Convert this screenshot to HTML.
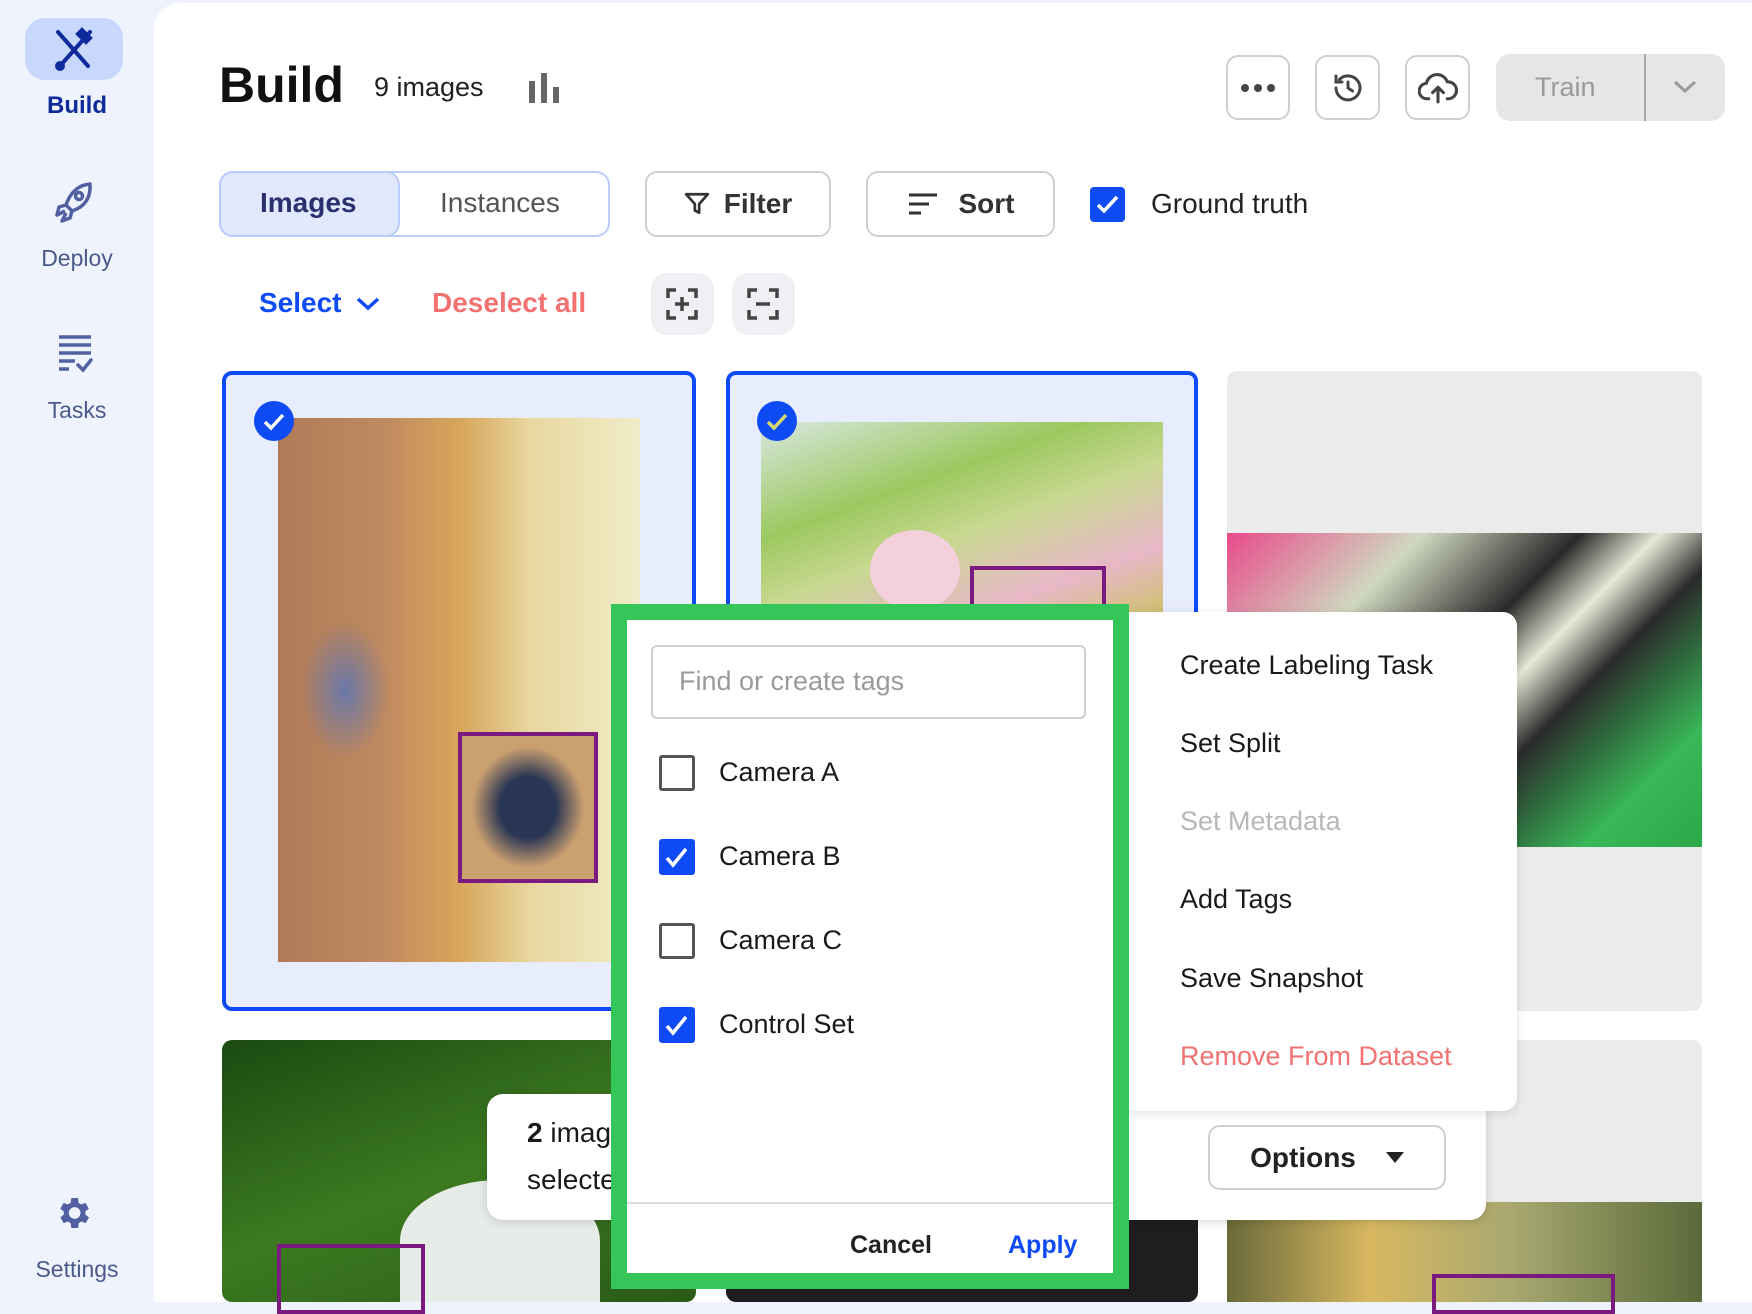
<!DOCTYPE html>
<html><head><meta charset="utf-8"><style>
*{margin:0;padding:0;box-sizing:border-box}
body{width:1752px;height:1302px;overflow:hidden;background:#eef3fd;font-family:"Liberation Sans",sans-serif;position:relative;color:#1a1a1a}
.a{position:absolute}
.main{left:154px;top:3px;width:1598px;height:1299px;background:#fff;border-top-left-radius:26px}
.nav{left:0;width:154px;text-align:center;font-size:23px;color:#4a5a8a}
.btn{border:2px solid #cfcfcf;border-radius:12px;background:#fff;display:flex;align-items:center;justify-content:center}
.card{border-radius:10px;overflow:hidden}
.sel{border:4px solid #0f4bf5;background:#e8edfd}
.chk{width:40px;height:40px;border-radius:50%;background:#0f4bf5}
.box{border:4px solid #7a1a80}
.cb{width:36px;height:36px;border:3px solid #555;border-radius:3px;background:#fff}
.cbon{background:#0f4bf5;border-color:#0f4bf5}
.lbl{font-size:27px;color:#1a1a1a}
.mi{left:1180px;font-size:27px;color:#1a1a1a}
</style></head><body>
<div class="a main"></div>
<!-- sidebar -->
<div class="a" style="left:25px;top:18px;width:98px;height:62px;background:#c8d8fd;border-radius:20px"></div>
<svg class="a" style="left:52px;top:26px" width="44" height="46" viewBox="0 0 44 46" fill="none" stroke="#0f2a9a" stroke-width="4" stroke-linecap="round"><path d="M6 6 L36 40"/><path d="M38 6 L8 40"/><path d="M30 4 l8 8 l-4 4 l-8-8z" fill="#0f2a9a"/><circle cx="8" cy="40" r="3"/></svg>
<div class="a nav" style="top:92px;color:#0f2a9a;font-weight:bold;font-size:24px">Build</div>
<svg class="a" style="left:54px;top:181px" width="40" height="42" viewBox="0 0 40 42" fill="none" stroke="#5060a0" stroke-width="3.5" stroke-linejoin="round"><path d="M36 3 C24 4 16 12 12 24 l6 6 C30 26 37 18 36 3z"/><circle cx="25" cy="15" r="3.5"/><path d="M12 24 l-7 2 l-2 8 l8-4"/><path d="M18 30 l-2 7 l-8 3 l4-8"/></svg>
<div class="a nav" style="top:245px">Deploy</div>
<svg class="a" style="left:57px;top:334px" width="36" height="40" viewBox="0 0 36 40" stroke="#5060a0" stroke-width="3.5" fill="none"><path d="M2 3h32M2 11h32M2 19h32M2 27h16M2 35h10"/><path d="M21 31l5 5 8-10" stroke-linecap="round"/></svg>
<div class="a nav" style="top:397px">Tasks</div>
<svg class="a" style="left:53px;top:1193px" width="40" height="40" viewBox="0 0 24 24" fill="#5060a0"><path d="M19.4 13a7.5 7.5 0 0 0 0-2l2.1-1.6-2-3.5-2.5 1a7.6 7.6 0 0 0-1.7-1L15 3h-4l-.4 2.9a7.6 7.6 0 0 0-1.7 1l-2.5-1-2 3.5L6.5 11a7.5 7.5 0 0 0 0 2l-2.1 1.6 2 3.5 2.5-1c.5.4 1.1.7 1.7 1L11 21h4l.4-2.9c.6-.3 1.2-.6 1.7-1l2.5 1 2-3.5zM13 15.5a3.5 3.5 0 1 1 0-7 3.5 3.5 0 0 1 0 7z"/></svg>
<div class="a nav" style="top:1256px">Settings</div>

<!-- header -->
<div class="a" style="left:219px;top:56px;font-size:50px;font-weight:bold;color:#111">Build</div>
<div class="a" style="left:374px;top:72px;font-size:27px;color:#222">9 images</div>
<svg class="a" style="left:529px;top:73px" width="32" height="30"><rect x="0" y="8" width="6" height="22" fill="#666"/><rect x="12" y="0" width="6" height="30" fill="#666"/><rect x="24" y="14" width="6" height="16" fill="#666"/></svg>
<div class="a btn" style="left:1226px;top:55px;width:64px;height:65px"><svg width="34" height="8"><circle cx="4" cy="4" r="4" fill="#444"/><circle cx="17" cy="4" r="4" fill="#444"/><circle cx="30" cy="4" r="4" fill="#444"/></svg></div>
<div class="a btn" style="left:1315px;top:55px;width:65px;height:65px"><svg width="36" height="36" viewBox="0 0 24 24" fill="none" stroke="#444" stroke-width="2" stroke-linecap="round"><path d="M4 12a8 8 0 1 0 2.3-5.7"/><path d="M4 4v4h4"/><path d="M12 8v4l3 2"/></svg></div>
<div class="a btn" style="left:1405px;top:55px;width:65px;height:65px"><svg width="40" height="36" viewBox="0 0 26 22" fill="none" stroke="#444" stroke-width="2" stroke-linecap="round" stroke-linejoin="round"><path d="M7 18H6a5 5 0 0 1-.5-10A7 7 0 0 1 19 7a5 5 0 0 1 1 11h-1"/><path d="M13 20v-9M9.5 14l3.5-3.5 3.5 3.5"/></svg></div>
<div class="a" style="left:1496px;top:54px;width:229px;height:67px;background:#e6e6e6;border-radius:14px"></div>
<div class="a" style="left:1644px;top:54px;width:2px;height:67px;background:#aaa"></div>
<div class="a" style="left:1535px;top:72px;font-size:27px;color:#9a9a9a">Train</div>
<svg class="a" style="left:1673px;top:80px" width="24" height="14"><path d="M2 2l10 9 10-9" stroke="#999" stroke-width="3" fill="none"/></svg>

<!-- row 2 -->
<div class="a" style="left:219px;top:171px;width:391px;height:66px;border:2px solid #bccbfb;border-radius:14px;background:#fff"></div>
<div class="a" style="left:219px;top:171px;width:181px;height:66px;border:2px solid #bccbfb;border-radius:14px;background:#e1eafd"></div>
<div class="a" style="left:260px;top:187px;font-size:28px;color:#2a2f6e;font-weight:bold">Images</div>
<div class="a" style="left:440px;top:187px;font-size:28px;color:#555">Instances</div>
<div class="a btn" style="left:645px;top:171px;width:186px;height:66px;font-size:28px;font-weight:bold;color:#333"><svg width="26" height="26" viewBox="0 0 24 24" fill="none" stroke="#333" stroke-width="2.5" stroke-linejoin="round" style="margin-right:14px"><path d="M2 3h20l-8 9v8l-4-2v-6z"/></svg>Filter</div>
<div class="a btn" style="left:866px;top:171px;width:189px;height:66px;font-size:28px;font-weight:bold;color:#333"><svg width="32" height="24" style="margin-right:20px"><path d="M2 3h28M2 12h20M2 21h12" stroke="#333" stroke-width="3"/></svg>Sort</div>
<div class="a" style="left:1090px;top:187px;width:35px;height:35px;background:#0f4bf5;border-radius:4px"><svg width="35" height="35"><path d="M8 18l6 6 13-14" stroke="#fff" stroke-width="3.5" fill="none"/></svg></div>
<div class="a" style="left:1151px;top:188px;font-size:28px;color:#222">Ground truth</div>

<!-- row 3 -->
<div class="a" style="left:259px;top:287px;font-size:28px;color:#0f4bf5;font-weight:bold">Select</div>
<svg class="a" style="left:355px;top:296px" width="26" height="16"><path d="M3 3l10 9 10-9" stroke="#0f4bf5" stroke-width="3.5" fill="none"/></svg>
<div class="a" style="left:432px;top:287px;font-size:28px;color:#f27171;font-weight:bold">Deselect all</div>
<div class="a" style="left:651px;top:273px;width:63px;height:62px;background:#eef0f3;border-radius:16px"></div>
<div class="a" style="left:732px;top:273px;width:63px;height:62px;background:#eef0f3;border-radius:16px"></div>
<svg class="a" style="left:666px;top:288px" width="32" height="32" viewBox="0 0 32 32" fill="none" stroke="#444" stroke-width="3.5"><path d="M2 10V2h8M22 2h8v8M30 22v8h-8M10 30H2v-8M16 9v14M9 16h14"/></svg>
<svg class="a" style="left:747px;top:288px" width="32" height="32" viewBox="0 0 32 32" fill="none" stroke="#444" stroke-width="3.5"><path d="M2 10V2h8M22 2h8v8M30 22v8h-8M10 30H2v-8M9 16h14"/></svg>

<!-- cards row 1 -->
<div class="a card sel" style="left:222px;top:371px;width:474px;height:640px"></div>
<div class="a" style="left:278px;top:418px;width:362px;height:544px;background:linear-gradient(90deg,#b07a58 0%,#c08a60 30%,#d7a55a 50%,#e8d8a0 70%,#f0ecc8 100%)"></div>
<div class="a" style="left:300px;top:620px;width:90px;height:140px;background:radial-gradient(#6a78a8,transparent 70%)"></div>
<div class="a box" style="left:458px;top:732px;width:140px;height:151px;background:radial-gradient(#2a3555 0 30%,#c9a070 60%)"></div>
<div class="a chk" style="left:254px;top:401px"><svg width="40" height="40"><path d="M11 21l6 6 12-13" stroke="#fff" stroke-width="3.5" fill="none"/></svg></div>

<div class="a card sel" style="left:726px;top:371px;width:472px;height:640px"></div>
<div class="a" style="left:761px;top:422px;width:402px;height:190px;background:linear-gradient(160deg,#d8e8e0 0%,#9cc860 35%,#c8d890 55%,#e8b8c8 80%,#d0c070 100%)"></div>
<div class="a" style="left:870px;top:530px;width:90px;height:80px;border-radius:50%;background:#f4d0dc"></div>
<div class="a box" style="left:970px;top:566px;width:136px;height:60px;border-bottom:none"></div>
<div class="a chk" style="left:757px;top:401px"><svg width="40" height="40"><path d="M11 21l6 6 12-13" stroke="#d8d870" stroke-width="3.5" fill="none"/></svg></div>

<div class="a card" style="left:1227px;top:371px;width:475px;height:640px;background:#ebebeb"></div>
<div class="a" style="left:1227px;top:533px;width:475px;height:314px;background:linear-gradient(135deg,#e84a8a 0%,#d0d8c0 25%,#2a2a2a 45%,#e8e8d8 55%,#2a2a2a 65%,#38b858 85%,#2aa848 100%)"></div>

<!-- cards row 2 -->
<div class="a card" style="left:222px;top:1040px;width:474px;height:262px;background:linear-gradient(160deg,#1a4a12,#3c7a20 50%,#2a5a18)"></div>
<div class="a" style="left:400px;top:1180px;width:200px;height:122px;border-radius:50% 50% 0 0;background:#e8ece8"></div>
<div class="a box" style="left:277px;top:1244px;width:148px;height:70px"></div>
<div class="a" style="left:726px;top:1040px;width:472px;height:262px;background:#1e1e1e;border-radius:10px"></div>
<div class="a card" style="left:1227px;top:1040px;width:475px;height:262px;background:#ebebeb"></div>
<div class="a" style="left:1227px;top:1202px;width:475px;height:100px;background:linear-gradient(90deg,#6a6a3a,#d8b860 30%,#a8a870 60%,#5a6a3a)"></div>
<div class="a box" style="left:1432px;top:1274px;width:183px;height:40px"></div>

<!-- bottom bar -->
<div class="a" style="left:487px;top:1094px;width:999px;height:126px;background:#fff;border-radius:16px;box-shadow:0 2px 10px rgba(0,0,0,.15)"></div>
<div class="a" style="left:527px;top:1117px;font-size:28px"><b>2</b> images</div>
<div class="a" style="left:527px;top:1164px;font-size:28px">selected</div>
<div class="a btn" style="left:1208px;top:1125px;width:238px;height:65px;font-size:28px;font-weight:bold;color:#222">Options<svg width="18" height="12" style="margin-left:30px"><path d="M0 0h18L9 11z" fill="#222"/></svg></div>

<!-- menu -->
<div class="a" style="left:1120px;top:612px;width:397px;height:499px;background:#fff;border-radius:14px;box-shadow:0 2px 10px rgba(0,0,0,.12)"></div>
<div class="a mi" style="top:650px">Create Labeling Task</div>
<div class="a mi" style="top:728px">Set Split</div>
<div class="a mi" style="top:806px;color:#b8b8b8">Set Metadata</div>
<div class="a mi" style="top:884px">Add Tags</div>
<div class="a mi" style="top:963px">Save Snapshot</div>
<div class="a mi" style="top:1041px;color:#f27171">Remove From Dataset</div>

<!-- green tag modal -->
<div class="a" style="left:611px;top:604px;width:518px;height:685px;background:#fff;border:16px solid #34c659"></div>
<div class="a" style="left:651px;top:645px;width:435px;height:74px;border:2px solid #cfcfcf;border-radius:6px"></div>
<div class="a" style="left:679px;top:666px;font-size:27px;color:#9a9a9a">Find or create tags</div>
<div class="a cb" style="left:659px;top:755px"></div>
<div class="a lbl" style="left:719px;top:757px">Camera A</div>
<div class="a cb cbon" style="left:659px;top:839px"><svg width="30" height="30"><path d="M5 16l6 7 13-16" stroke="#fff" stroke-width="3.5" fill="none"/></svg></div>
<div class="a lbl" style="left:719px;top:841px">Camera B</div>
<div class="a cb" style="left:659px;top:923px"></div>
<div class="a lbl" style="left:719px;top:925px">Camera C</div>
<div class="a cb cbon" style="left:659px;top:1007px"><svg width="30" height="30"><path d="M5 16l6 7 13-16" stroke="#fff" stroke-width="3.5" fill="none"/></svg></div>
<div class="a lbl" style="left:719px;top:1009px">Control Set</div>
<div class="a" style="left:627px;top:1202px;width:486px;height:2px;background:#ddd"></div>
<div class="a" style="left:850px;top:1231px;font-size:25px;font-weight:bold;color:#222">Cancel</div>
<div class="a" style="left:1008px;top:1231px;font-size:25px;font-weight:bold;color:#0f4bf5">Apply</div>
</body></html>
